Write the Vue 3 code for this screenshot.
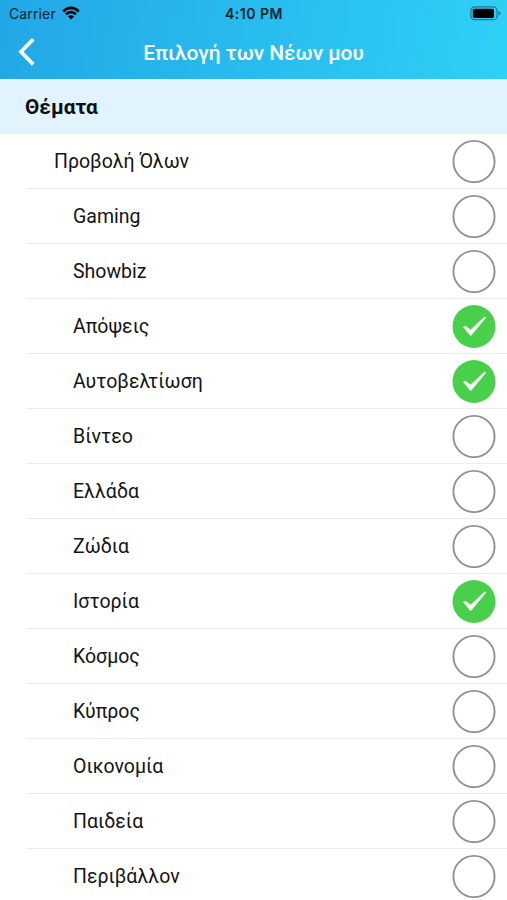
<script setup>
import { ref } from 'vue'

const topics = ref([
  { name: 'Προβολή Όλων', all: true, on: false },
  { name: 'Gaming', on: false },
  { name: 'Showbiz', on: false },
  { name: 'Απόψεις', on: true },
  { name: 'Αυτοβελτίωση', on: true },
  { name: 'Βίντεο', on: false },
  { name: 'Ελλάδα', on: false },
  { name: 'Ζώδια', on: false },
  { name: 'Ιστορία', on: true },
  { name: 'Κόσμος', on: false },
  { name: 'Κύπρος', on: false },
  { name: 'Οικονομία', on: false },
  { name: 'Παιδεία', on: false },
  { name: 'Περιβάλλον', on: false },
])
</script>

<template>
  <main class="screen">
    <header class="top">
      <div class="status">
        <div class="carrier">
          <span>Carrier</span>
          <svg class="wifi" viewBox="0 0 18 14" width="18" height="14">
            <path d="M0.4 4.6C5.2-0.9 12.8-0.9 17.6 4.6L15.8 6.4C12 2.1 6 2.1 2.2 6.4Z" />
            <path d="M3.2 7.5C6.5 3.9 11.5 3.9 14.8 7.5L13 9.3C10.7 6.9 7.3 6.9 5 9.3Z" />
            <path d="M6 10.4C7.7 8.7 10.3 8.7 12 10.4L9 13.5Z" />
          </svg>
        </div>
        <span class="time">4:10 PM</span>
        <svg class="battery" viewBox="0 0 31 15" width="31" height="15">
          <rect x="0.9" y="0.9" width="26.2" height="12.8" rx="3.8" fill="none" stroke="#000" stroke-opacity="0.42" stroke-width="1.2" />
          <rect x="2.8" y="2.7" width="21.2" height="9.2" rx="1.6" />
          <path d="M28.6 5Q30.4 5.8 30.4 7.2T28.6 9.4Z" fill-opacity="0.42" />
        </svg>
      </div>
      <div class="nav">
        <svg class="back" viewBox="0 0 18 30" width="18" height="30">
          <path d="M16 2.2L3.8 14.8L16 27.4" transform="translate(-0.8 0)" fill="none" stroke="#fff" stroke-width="3.8" />
        </svg>
        <h1>Επιλογή των Νέων μου</h1>
        <span></span>
      </div>
    </header>
    <h2>Θέματα</h2>
    <ul>
      <li v-for="t in topics" :key="t.name" :class="{ all: t.all }" @click="t.on = !t.on">
        <span>{{ t.name }}</span>
        <svg viewBox="0 -0.5 44 44" width="44" height="44">
          <template v-if="t.on">
            <circle cx="22" cy="22" r="21.5" fill="#48d04b" />
            <path d="M11.4 22.6L13.4 21.7L18.6 25.4L32.6 12.5L33.7 13.2L18.7 31.3Z" fill="#fff" stroke="#fff" stroke-width="0.6" stroke-linejoin="round" />
          </template>
          <circle v-else cx="22" cy="22" r="20.6" fill="#fff" stroke="#929292" stroke-width="1.9" />
        </svg>
      </li>
    </ul>
  </main>
</template>

<style>
body {
  margin: 0;
  background: #fff;
}
</style>

<style scoped>
.screen {
  height: 900px;
  overflow: hidden;
  font-family: Roboto, sans-serif;
  color: #141414;
}
.top {
  height: 79px;
  box-sizing: border-box;
  background: linear-gradient(100deg, #22a7e6, #2fd0f6);
}
.status {
  height: 27px;
  display: grid;
  grid-template-columns: 1fr auto 1fr;
  align-items: center;
  padding: 0 6px 0 9px;
  font-family: Inter, sans-serif;
  font-size: 14px;
  color: #06222e;
}
.carrier {
  display: flex;
  align-items: center;
  gap: 6px;
  letter-spacing: 0.13px;
}
.wifi {
  margin-top: -2px;
  fill: #000;
}
.time {
  margin-left: -2px;
  font-weight: 600;
  letter-spacing: 0.5px;
}
.battery {
  justify-self: end;
}
.nav {
  height: 52px;
  display: grid;
  grid-template-columns: 1fr auto 1fr;
  align-items: center;
  padding: 0 18px;
}
.back {
  margin-top: -3px;
}
h1 {
  margin: 0;
  font-size: 20.9px;
  font-weight: 500;
  color: #fff;
}
h2 {
  margin: 0;
  height: 55px;
  padding-left: 25px;
  background: #e1f3fe;
  font-size: 20.8px;
  line-height: 56px;
  font-weight: 700;
  color: #0c0f11;
}
ul {
  margin: 0;
  padding: 0 0 0 26px;
  list-style: none;
}
li {
  height: 55px;
  box-sizing: border-box;
  display: flex;
  align-items: center;
  justify-content: space-between;
  padding: 0 11px 0 47px;
  border-bottom: 1px solid #ebebeb;
  font-size: 19.5px;
}
li.all {
  padding-left: 28px;
}
</style>
